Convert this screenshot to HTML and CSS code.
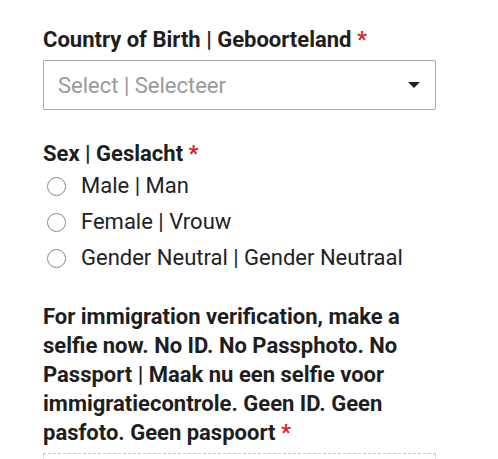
FILE: index.html
```html
<!DOCTYPE html>
<html>
<head>
<meta charset="utf-8">
<link rel="stylesheet" href="styles.css">
</head>
<body>
<div class="form">
  <div class="field">
    <div class="label">Country of Birth | Geboorteland <span class="req">*</span></div>
    <div class="select">
      <span class="placeholder">Select | Selecteer</span>
      <span class="caret"></span>
    </div>
  </div>
  <div class="field sex">
    <div class="label">Sex | Geslacht <span class="req">*</span></div>
    <div class="radios">
      <label class="radio"><span class="circle"></span>Male | Man</label>
      <label class="radio"><span class="circle"></span>Female | Vrouw</label>
      <label class="radio"><span class="circle"></span>Gender Neutral | Gender Neutraal</label>
    </div>
  </div>
  <div class="field selfie">
    <div class="label long">For immigration verification, make a selfie now. No ID. No Passphoto. No Passport | Maak nu een selfie voor immigratiecontrole. Geen ID. Geen pasfoto. Geen paspoort <span class="req">*</span></div>
    <div class="drop"></div>
  </div>
</div>
</body>
</html>
```

FILE: styles.css
```css
html, body {
  margin: 0;
  padding: 0;
  background: #fff;
  overflow: hidden;
}
body {
  font-family: Roboto, "Liberation Sans", sans-serif;
  color: #212121;
}
.form {
  width: 393px;
  padding: 27px 0 0 43px;
}
.label {
  font-weight: 700;
  font-size: 22px;
  line-height: 26px;
  color: #1e1e1e;
}
.req {
  color: #e02020;
}
.select {
  margin-top: 7px;
  height: 48px;
  border: 1px solid #a9a9a9;
  border-radius: 2px;
  display: flex;
  align-items: center;
  justify-content: space-between;
  padding: 0 15px 0 14px;
}
.placeholder {
  font-size: 22px;
  color: #9a9a9a;
}
.caret {
  width: 0;
  height: 0;
  border-left: 6.5px solid transparent;
  border-right: 6.5px solid transparent;
  border-top: 6.5px solid #222;
}
.sex {
  margin-top: 31px;
}
.radios {
  display: flex;
  flex-direction: column;
  margin-top: 1px;
}
.radio {
  display: flex;
  align-items: center;
  font-size: 22px;
  line-height: 36px;
  height: 36px;
  color: #222;
}
.circle {
  width: 19px;
  height: 19px;
  border: 1.5px solid #8a8a8a;
  border-radius: 50%;
  margin: 0 15px 0 4px;
  box-sizing: border-box;
}
.selfie {
  margin-top: 26px;
}
.label.long {
  line-height: 29px;
}
.drop {
  margin-top: 6px;
  height: 40px;
  border: 1px dashed #c8c8c8;
  border-bottom: none;
}
```
